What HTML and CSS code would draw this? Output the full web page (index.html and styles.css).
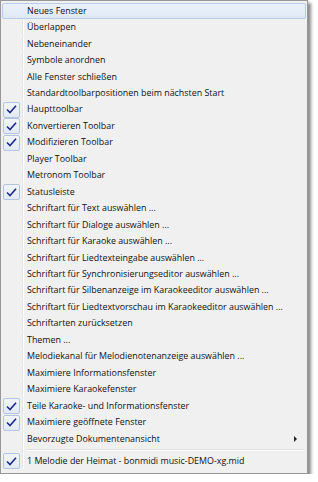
FILE: index.html
```html
<!DOCTYPE html>
<html>
<head>
<meta charset="utf-8">
<link rel="stylesheet" href="styles.css">
</head>
<body>
<div class="menu">
  <div class="item hover"><span class="gut"></span><span class="label">Neues Fenster</span></div>
  <div class="item"><span class="gut"></span><span class="label">Überlappen</span></div>
  <div class="item"><span class="gut"></span><span class="label">Nebeneinander</span></div>
  <div class="item"><span class="gut"></span><span class="label">Symbole anordnen</span></div>
  <div class="item"><span class="gut"></span><span class="label">Alle Fenster schließen</span></div>
  <div class="item"><span class="gut"></span><span class="label">Standardtoolbarpositionen beim nächsten Start</span></div>
  <div class="item"><span class="gut"><span class="check"><svg width="11" height="9" viewBox="0 0 11 9"><path d="M1 4.5 L4 7.5 L10 0.8" fill="none" stroke="#1f2a8c" stroke-width="1.6"/></svg></span></span><span class="label">Haupttoolbar</span></div>
  <div class="item"><span class="gut"><span class="check"><svg width="11" height="9" viewBox="0 0 11 9"><path d="M1 4.5 L4 7.5 L10 0.8" fill="none" stroke="#1f2a8c" stroke-width="1.6"/></svg></span></span><span class="label">Konvertieren Toolbar</span></div>
  <div class="item"><span class="gut"><span class="check"><svg width="11" height="9" viewBox="0 0 11 9"><path d="M1 4.5 L4 7.5 L10 0.8" fill="none" stroke="#1f2a8c" stroke-width="1.6"/></svg></span></span><span class="label">Modifizieren Toolbar</span></div>
  <div class="item"><span class="gut"></span><span class="label">Player Toolbar</span></div>
  <div class="item"><span class="gut"></span><span class="label">Metronom Toolbar</span></div>
  <div class="item"><span class="gut"><span class="check"><svg width="11" height="9" viewBox="0 0 11 9"><path d="M1 4.5 L4 7.5 L10 0.8" fill="none" stroke="#1f2a8c" stroke-width="1.6"/></svg></span></span><span class="label">Statusleiste</span></div>
  <div class="item"><span class="gut"></span><span class="label">Schriftart für Text auswählen ...</span></div>
  <div class="item"><span class="gut"></span><span class="label">Schriftart für Dialoge auswählen ...</span></div>
  <div class="item"><span class="gut"></span><span class="label">Schriftart für Karaoke auswählen ...</span></div>
  <div class="item"><span class="gut"></span><span class="label">Schriftart für Liedtexteingabe auswählen ...</span></div>
  <div class="item"><span class="gut"></span><span class="label">Schriftart für Synchronisierungseditor auswählen ...</span></div>
  <div class="item"><span class="gut"></span><span class="label">Schriftart für Silbenanzeige im Karaokeeditor auswählen ...</span></div>
  <div class="item"><span class="gut"></span><span class="label">Schriftart für Liedtextvorschau im Karaokeeditor auswählen ...</span></div>
  <div class="item"><span class="gut"></span><span class="label">Schriftarten zurücksetzen</span></div>
  <div class="item"><span class="gut"></span><span class="label">Themen ...</span></div>
  <div class="item"><span class="gut"></span><span class="label">Melodiekanal für Melodienotenanzeige auswählen ...</span></div>
  <div class="item"><span class="gut"></span><span class="label">Maximiere Informationsfenster</span></div>
  <div class="item"><span class="gut"></span><span class="label">Maximiere Karaokefenster</span></div>
  <div class="item"><span class="gut"><span class="check"><svg width="11" height="9" viewBox="0 0 11 9"><path d="M1 4.5 L4 7.5 L10 0.8" fill="none" stroke="#1f2a8c" stroke-width="1.6"/></svg></span></span><span class="label">Teile Karaoke- und Informationsfenster</span></div>
  <div class="item"><span class="gut"><span class="check"><svg width="11" height="9" viewBox="0 0 11 9"><path d="M1 4.5 L4 7.5 L10 0.8" fill="none" stroke="#1f2a8c" stroke-width="1.6"/></svg></span></span><span class="label">Maximiere geöffnete Fenster</span></div>
  <div class="item"><span class="gut"></span><span class="label">Bevorzugte Dokumentenansicht</span><span class="arrow"></span></div>
  <div class="sep"><span class="gut"></span><span class="line"></span></div>
  <div class="item"><span class="gut"><span class="check"><svg width="11" height="9" viewBox="0 0 11 9"><path d="M1 4.5 L4 7.5 L10 0.8" fill="none" stroke="#1f2a8c" stroke-width="1.6"/></svg></span></span><span class="label">1 Melodie der Heimat - bonmidi music-DEMO-xg.mid</span></div>
</div>
</body>
</html>
```
FILE: styles.css
```css
html, body {
  margin: 0;
  padding: 0;
  background: #ffffff;
}
body {
  font-family: "Open Sans", "Noto Sans", sans-serif;
  font-size: 8.9px;
  color: #111;
}
.menu {
  width: 304px;
  padding: 2px 1px 3px 1px;
  border: 1px solid #979797;
  background: #f0f0f0;
  box-shadow: 3px 3px 3px rgba(0, 0, 0, 0.45);
  display: flex;
  flex-direction: column;
}
.item {
  height: 16.46px;
  display: flex;
  align-items: center;
  position: relative;
  border: 1px solid transparent;
  border-radius: 2px;
  box-sizing: border-box;
}
.item.hover {
  background: linear-gradient(#eaf1fa, #dfe9f6);
  border-color: #b6cdea;
}
.gut {
  width: 19px;
  align-self: stretch;
  display: flex;
  align-items: center;
  justify-content: flex-start;
  border-right: 1px solid #e2e3e3;
  box-shadow: 1px 0 0 #ffffff;
  margin-right: 4px;
  flex: none;
}
.item.hover .gut {
  border-right-color: transparent;
  box-shadow: none;
}
.check {
  width: 15px;
  height: 14px;
  border: 1px solid #b4c4e0;
  border-radius: 2px;
  background: linear-gradient(#f0f4fb, #e2eaf6);
  display: flex;
  align-items: center;
  justify-content: center;
}
.label {
  white-space: nowrap;
  line-height: 1;
}
.arrow {
  position: absolute;
  right: 8px;
  top: 50%;
  margin-top: -3px;
  width: 0;
  height: 0;
  border-left: 3px solid #222;
  border-top: 3px solid transparent;
  border-bottom: 3px solid transparent;
}
.sep {
  height: 6px;
  display: flex;
}
.sep .gut {
  width: 20px;
  margin-right: 3px;
}
.sep .line {
  flex: 1;
  align-self: center;
  height: 1px;
  border-bottom: 1px solid #ffffff;
  background: #e0e0e0;
  margin-right: 2px;
}
```
